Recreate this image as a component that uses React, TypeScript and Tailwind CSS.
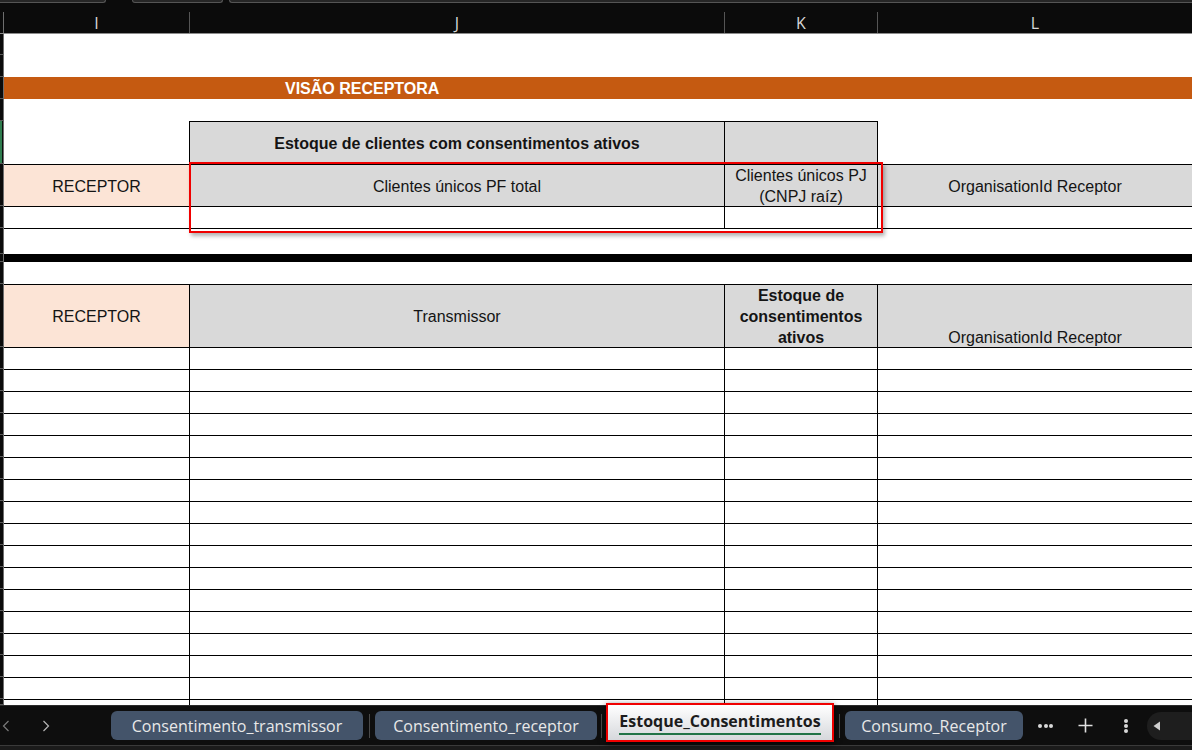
import React from "react";

function Rail({ green = false }: { green?: boolean }) {
  return (
    <div className="w-[4px] shrink-0 self-stretch bg-[#0b0b0b] border-r border-r-[#6e6e6e] border-b border-b-[#5a5a5a] flex">
      {green ? <div className="w-[2px] h-full bg-[#2f7d4f]" /> : null}
    </div>
  );
}

function DataRow() {
  return (
    <div className="flex h-[22px] shrink-0">
      <Rail />
      <div className="w-[185px] border-t border-black" />
      <div className="w-[535px] border-t border-l border-black" />
      <div className="w-[153px] border-t border-l border-black" />
      <div className="flex-1 border-t border-l border-black" />
    </div>
  );
}

function Chevron({ dir, color }: { dir: "l" | "r"; color: string }) {
  return (
    <svg width="8" height="12" viewBox="0 0 8 12" fill="none">
      <path
        d={dir === "l" ? "M6.5 1 L1.5 6 L6.5 11" : "M1.5 1 L6.5 6 L1.5 11"}
        stroke={color}
        strokeWidth="1.2"
      />
    </svg>
  );
}

export default function App() {
  const rows = Array.from({ length: 16 }, (_, i) => i);
  return (
    <div className="w-[1192px] h-[750px] overflow-hidden bg-white flex flex-col relative font-['Liberation_Sans',Arial,sans-serif] text-[16px] text-[#141414]">
      {/* top strip */}
      <div className="h-[4px] shrink-0 flex bg-[#0b0b0b]">
        <div className="w-[106px] h-[3px] bg-[#262626] border-b border-r border-[#555] rounded-br-[4px]" />
        <div className="w-[26px]" />
        <div className="w-[91px] h-[3px] bg-[#262626] border-b border-x border-[#555] rounded-b-[4px]" />
        <div className="w-[6px]" />
        <div className="flex-1 h-[3px] bg-[#262626] border-b border-l border-[#555] rounded-bl-[4px]" />
      </div>

      {/* column headers */}
      <div className="h-[30px] shrink-0 flex bg-[#0b0b0b] border-b border-[#8c8c8c] font-['Open_Sans',sans-serif] text-[16px] text-[#d8d8d8]">
        <div className="w-[4px] flex items-end">
          <div className="h-[21px] w-full border-r border-[#6e6e6e]" />
        </div>
        <div className="w-[185px] flex items-end">
          <div className="h-[21px] w-full flex items-center justify-center">I</div>
        </div>
        <div className="w-[535px] flex items-end">
          <div className="h-[21px] w-full border-l border-[#555] flex items-center justify-center">J</div>
        </div>
        <div className="w-[153px] flex items-end">
          <div className="h-[21px] w-full border-l border-[#555] flex items-center justify-center">K</div>
        </div>
        <div className="flex-1 flex items-end">
          <div className="h-[21px] w-full border-l border-[#555] flex items-center justify-center">L</div>
        </div>
      </div>

      {/* sheet */}
      <div className="flex flex-col flex-1 min-h-0">
        <div className="flex h-[21px] shrink-0">
          <Rail />
          <div className="flex-1" />
        </div>
        <div className="flex h-[22px] shrink-0">
          <Rail />
          <div className="flex-1" />
        </div>
        <div className="flex h-[22px] shrink-0">
          <Rail />
          <div className="flex-1 bg-[#c55a11] flex items-center pl-[281px] pt-[2px] text-white font-bold">
            VISÃO RECEPTORA
          </div>
        </div>
        <div className="flex h-[22px] shrink-0">
          <Rail />
          <div className="flex-1" />
        </div>

        {/* table 1 header */}
        <div className="flex h-[43px] shrink-0">
          <Rail green />
          <div className="w-[185px]" />
          <div className="w-[535px] bg-[#d9d9d9] border-t border-l border-black flex items-center justify-center pt-[2px] font-bold">
            Estoque de clientes com consentimentos ativos
          </div>
          <div className="w-[153px] bg-[#d9d9d9] border-t border-l border-black" />
          <div className="flex-1 border-l border-black" />
        </div>
        <div className="flex h-[42px] shrink-0">
          <Rail />
          <div className="w-[185px] bg-[#fce4d6] border-t border-black flex items-center justify-center pt-[2px]">
            RECEPTOR
          </div>
          <div className="w-[535px] bg-[#d9d9d9] border-t border-l border-black flex items-center justify-center pt-[2px]">
            Clientes únicos PF total
          </div>
          <div className="w-[153px] bg-[#d9d9d9] border-t border-l border-black flex items-center justify-center text-center leading-[21px] pt-[1px]">
            Clientes únicos PJ
            <br />
            (CNPJ raíz)
          </div>
          <div className="flex-1 bg-[#d9d9d9] border-t border-l border-black flex items-center justify-center pt-[2px]">
            OrganisationId Receptor
          </div>
        </div>
        <DataRow />
        <div className="flex h-[26px] shrink-0">
          <Rail />
          <div className="flex-1 border-t border-black" />
        </div>
        <div className="flex h-[8px] shrink-0">
          <Rail />
          <div className="flex-1 bg-black" />
        </div>
        <div className="flex h-[22px] shrink-0">
          <Rail />
          <div className="flex-1" />
        </div>

        {/* table 2 header */}
        <div className="flex h-[63px] shrink-0">
          <Rail />
          <div className="w-[185px] bg-[#fce4d6] border-t border-black flex items-center justify-center pt-[2px]">
            RECEPTOR
          </div>
          <div className="w-[535px] bg-[#d9d9d9] border-t border-l border-black flex items-center justify-center pt-[2px]">
            Transmissor
          </div>
          <div className="w-[153px] bg-[#d9d9d9] border-t border-l border-black flex items-center justify-center text-center font-bold leading-[21px]">
            Estoque de
            <br />
            consentimentos
            <br />
            ativos
          </div>
          <div className="flex-1 bg-[#d9d9d9] border-t border-l border-black flex items-end justify-center leading-[19px]">
            OrganisationId Receptor
          </div>
        </div>
        {rows.map((r) => (
          <DataRow key={r} />
        ))}
        <div className="flex flex-1 min-h-0">
          <Rail />
          <div className="w-[185px] border-t border-black" />
          <div className="w-[535px] border-t border-l border-black" />
          <div className="w-[153px] border-t border-l border-black" />
          <div className="flex-1 border-t border-l border-black" />
        </div>
      </div>

      {/* annotation box */}
      <div className="absolute left-[189px] top-[162px] w-[694px] h-[71px] border-2 border-[#f00000] shadow-[2px_3px_4px_rgba(0,0,0,0.3)]" />

      {/* sheet tabs */}
      <div className="h-[45px] shrink-0 flex flex-col bg-[#0e0e0e] border-t border-[#2c2c2c] font-['Open_Sans',sans-serif] text-[16px]">
        <div className="h-[39px] flex items-center">
          <div className="ml-[2px] w-[8px] flex justify-center">
            <Chevron dir="l" color="#7a7a7a" />
          </div>
          <div className="ml-[32px] w-[8px] flex justify-center">
            <Chevron dir="r" color="#b5b5b5" />
          </div>
          <div className="ml-[61px] w-[252px] h-[29px] rounded-[6px] bg-[#44546a] text-[#e8e8e8] flex items-center justify-center">
            Consentimento_transmissor
          </div>
          <div className="ml-[6px] w-px h-[24px] bg-[#4a4a4a]" />
          <div className="ml-[5px] w-[222px] h-[29px] rounded-[6px] bg-[#44546a] text-[#e8e8e8] flex items-center justify-center">
            Consentimento_receptor
          </div>
          <div className="ml-[4px] w-px h-[24px] bg-[#4a4a4a]" />
          <div className="relative -top-[3px] ml-[4px] w-[228px] h-[39px] border-2 border-[#f00000] bg-gradient-to-b from-[#ffffff] to-[#d6d8dc] shadow-[0_2px_6px_rgba(0,0,0,0.7)] flex items-center justify-center">
            <span className="font-bold text-[#1c1c1c] border-b-2 border-[#217346] leading-[20px] pb-[2px] mt-[1px]">
              Estoque_Consentimentos
            </span>
          </div>
          <div className="ml-[5px] w-px h-[24px] bg-[#4a4a4a]" />
          <div className="ml-[5px] w-[178px] h-[29px] rounded-[6px] bg-[#44546a] text-[#e8e8e8] flex items-center justify-center">
            Consumo_Receptor
          </div>
          <div className="ml-[15px] w-[15px] flex items-center justify-between">
            <div className="w-[4px] h-[4px] rounded-full bg-[#d8d8d8]" />
            <div className="w-[4px] h-[4px] rounded-full bg-[#d8d8d8]" />
            <div className="w-[4px] h-[4px] rounded-full bg-[#d8d8d8]" />
          </div>
          <svg className="ml-[25px]" width="15" height="15" viewBox="0 0 15 15">
            <path d="M7.5 0.5 V14.5 M0.5 7.5 H14.5" stroke="#e0e0e0" strokeWidth="1.6" />
          </svg>
          <div className="ml-[31px] w-[4px] h-[14px] flex flex-col justify-between items-center">
            <div className="w-[4px] h-[4px] rounded-full bg-[#d8d8d8]" />
            <div className="w-[4px] h-[4px] rounded-full bg-[#d8d8d8]" />
            <div className="w-[4px] h-[4px] rounded-full bg-[#d8d8d8]" />
          </div>
          <div className="ml-[19px] flex-1 h-[28px] rounded-l-full bg-[#1e1e1e] flex items-center pl-[6px]">
            <svg width="8" height="10" viewBox="0 0 8 10">
              <path d="M7 0.5 L7 9.5 L0.5 5 Z" fill="#cfcfcf" />
            </svg>
          </div>
        </div>
        <div className="flex-1 bg-[#1b1b1b] border-t border-[#3a3a3a]" />
      </div>
    </div>
  );
}
